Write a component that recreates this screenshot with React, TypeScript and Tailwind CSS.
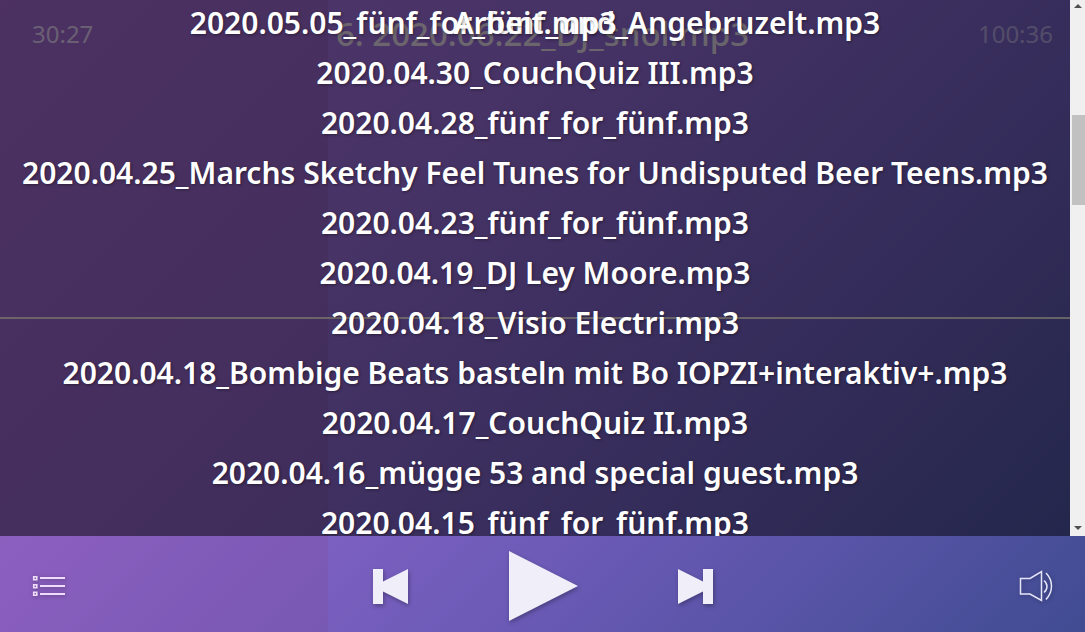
const tracks = [
  "2020.05.05_fünf_for_fünf_und_Angebruzelt.mp3",
  "2020.04.30_CouchQuiz III.mp3",
  "2020.04.28_fünf_for_fünf.mp3",
  "2020.04.25_Marchs Sketchy Feel Tunes for Undisputed Beer Teens.mp3",
  "2020.04.23_fünf_for_fünf.mp3",
  "2020.04.19_DJ Ley Moore.mp3",
  "2020.04.18_Visio Electri.mp3",
  "2020.04.18_Bombige Beats basteln mit Bo IOPZI+interaktiv+.mp3",
  "2020.04.17_CouchQuiz II.mp3",
  "2020.04.16_mügge 53 and special guest.mp3",
  "2020.04.15_fünf_for_fünf.mp3",
];

function Playlist() {
  return (
    <div className="absolute inset-0 flex overflow-hidden bg-black/50">
      <ul className="relative -mt-0.5 min-w-0 flex-1 whitespace-nowrap text-center text-[30px] font-semibold leading-[50px] text-shadow-[1px_1px_3px_rgb(0_0_0/0.4)]">
        <li className="absolute inset-x-0 top-0">Arbeit.mp3</li>
        {tracks.map((name) => (
          <li key={name}>{name}</li>
        ))}
      </ul>
      <div className="flex w-[15px] flex-col items-center justify-between bg-[#f0f0f0] pb-1.5 pt-1" aria-hidden="true">
        <svg width="8" height="4" viewBox="0 0 8 4" fill="#505050">
          <path d="M0 4 4 0 8 4Z" />
        </svg>
        <div className="flex w-full flex-1 flex-col pl-0.5">
          <div className="h-[107px] shrink-0" />
          <div className="h-[90px] bg-[#c1c1c1]" />
        </div>
        <svg width="8" height="4" viewBox="0 0 8 4" fill="#505050">
          <path d="M0 0 4 4 8 0Z" />
        </svg>
      </div>
    </div>
  );
}

function Controls() {
  return (
    <footer className="grid h-24 shrink-0 grid-cols-[1fr_auto_1fr] items-center px-8 pt-1">
      <button aria-label="Playlist" className="justify-self-start drop-shadow-[1px_1px_2px_rgba(0,0,0,0.3)]">
        <svg className="block" width="34" height="24" viewBox="0 0 34 24" fill="none" stroke="#efdcfb">
          <path strokeWidth="1.7" d="M1.75 2.75h3v3h-3zM1.75 10.75h3v3h-3zM1.75 18.25h3v3h-3z" />
          <path strokeWidth="1.8" d="M8 4h25M8 12h25M8 20h25" />
        </svg>
      </button>
      <div className="flex items-center gap-[100px] drop-shadow-[1px_2px_2px_rgba(0,0,0,0.3)]">
        <button aria-label="Previous">
          <svg className="block" width="36" height="35" viewBox="0 0 36 35" fill="#f0eef8">
            <path d="M1 0h10v12.5L36 0v35L11 22.5V35H1Z" />
          </svg>
        </button>
        <button aria-label="Play">
          <svg className="block" width="70" height="70" viewBox="0 0 70 70" fill="#f0eef8">
            <path d="M1 0 70 35 1 70Z" />
          </svg>
        </button>
        <button aria-label="Next">
          <svg className="block" width="36" height="35" viewBox="0 0 36 35" fill="#f0eef8">
            <path d="M0 0 25 12.5V0h10v35H25V22.5L0 35Z" />
          </svg>
        </button>
      </div>
      <button aria-label="Volume" className="justify-self-end drop-shadow-[1px_1px_2px_rgba(0,0,0,0.3)]">
        <svg className="block" width="34" height="32" viewBox="0 0 34 32" fill="none" stroke="#e6e6fa" strokeWidth="1.5">
          <path d="M1.5 8.5h9.5L22.5 1.5v29L11 24H1.5Z" />
          <path d="M25 10.5q3 2.5 3 6t-3 6" />
          <path d="M27 3q5.5 5.5 5.5 13T27 29.5" />
        </svg>
      </button>
    </footer>
  );
}

export default function App() {
  return (
    <div className="relative isolate flex h-screen flex-col overflow-hidden bg-[linear-gradient(135deg,#a26cd6_0%,#8e66cc_35%,#6859b4_68%,#404c92_100%)] font-['Trebuchet_MS','Noto_Sans',sans-serif] text-white">
      <div className="absolute inset-y-0 left-0 -z-10 w-[30.2%] bg-[#7c4892]/25" />
      <main className="relative min-h-0 flex-1 overflow-hidden">
        <header className="grid grid-cols-[1fr_auto_1fr] items-center px-8 pt-2.5 text-2xl leading-[48px]">
          <time className="text-white/60">30:27</time>
          <h1 className="text-[33px] font-medium text-[#f8f8e0]/70">6. 2020.06.22_DJ_snol.mp3</h1>
          <time className="justify-self-end text-white/40">100:36</time>
        </header>
        <div className="absolute inset-x-0 top-[317px] h-0.5 bg-[#f4ecd8]/75" />
        <Playlist />
      </main>
      <Controls />
    </div>
  );
}
